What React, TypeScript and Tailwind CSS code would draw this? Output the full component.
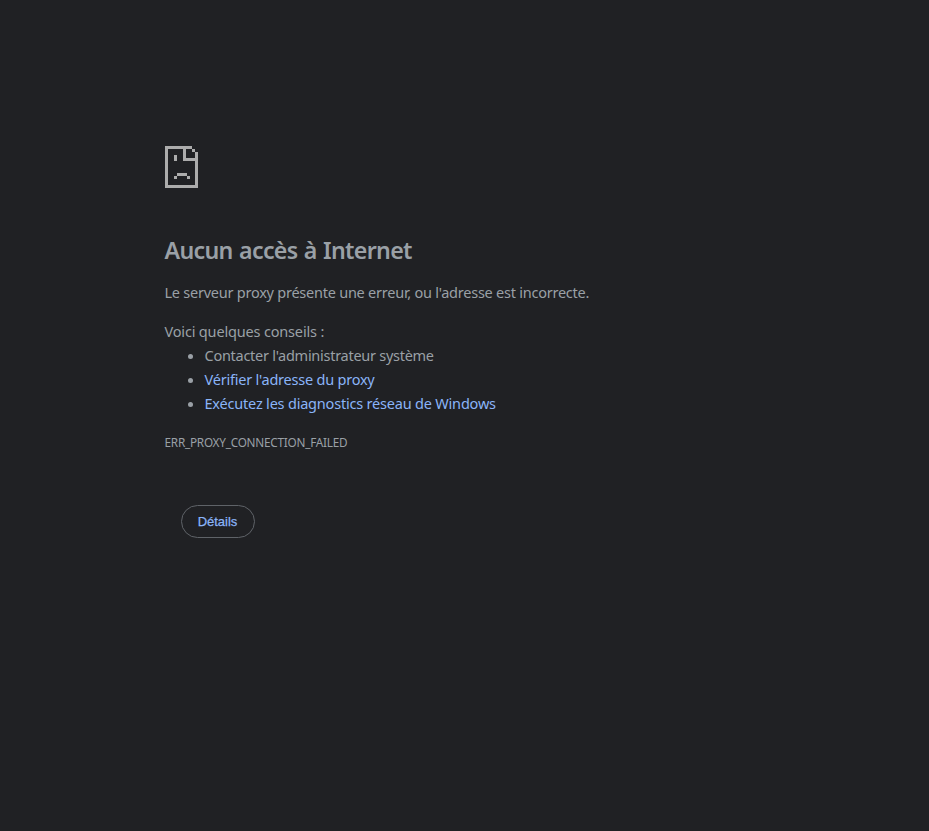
function SadPage() {
  return (
    <svg width="33" height="42" viewBox="0 0 33 42" fill="#acacac" shapeRendering="crispEdges" className="block" aria-hidden="true">
      <path d="M0 0H27V3H3V39H30V15H18V3H21V12H30V6H33V42H0Z" />
      <path d="M27 3H30V6H27ZM9 9H12V15H9ZM12 27H22V30H12ZM9 30H12V33H9ZM22 30H25V33H22Z" />
    </svg>
  );
}

export default function App() {
  return (
    <main className="min-h-screen bg-[#202124] pl-[165px] pt-[146px] font-['Noto_Sans',sans-serif] text-[14.5px] leading-6 text-[#9aa0a6]">
      <SadPage />
      <div className="-ml-[0.5px]">
        <h1 className="mt-[47px] w-fit whitespace-nowrap text-[23.2px] font-semibold leading-[30px] tracking-[-0.68px] [word-spacing:1px]">Aucun accès à Internet</h1>
        <p className="mt-[15px] w-fit whitespace-nowrap tracking-[-0.24px]">Le serveur proxy présente une erreur, ou l'adresse est incorrecte.</p>
        <p className="mt-[15px] w-fit whitespace-nowrap tracking-[-0.17px]">Voici quelques conseils :</p>
        <ul className="list-disc pl-10">
          <li className="tracking-[-0.27px]">Contacter l'administrateur système</li>
          <li className="tracking-[-0.22px]"><a className="text-[#8ab4f8]">Vérifier l'adresse du proxy</a></li>
          <li className="tracking-[-0.2px]"><a className="text-[#8ab4f8]">Exécutez les diagnostics réseau de Windows</a></li>
        </ul>
        <div className="mt-[15px] w-fit whitespace-nowrap text-[11.75px] leading-6 tracking-[-0.23px]">ERR_PROXY_CONNECTION_FAILED</div>
      </div>
      <button className="ml-4 mt-[51px] flex h-[33px] w-[74px] items-center justify-center rounded-full border border-[#5f6368] pr-px font-['Liberation_Sans',sans-serif] text-[13px] text-[#8ab4f8] [-webkit-text-stroke:0.25px]">Détails</button>
    </main>
  );
}
